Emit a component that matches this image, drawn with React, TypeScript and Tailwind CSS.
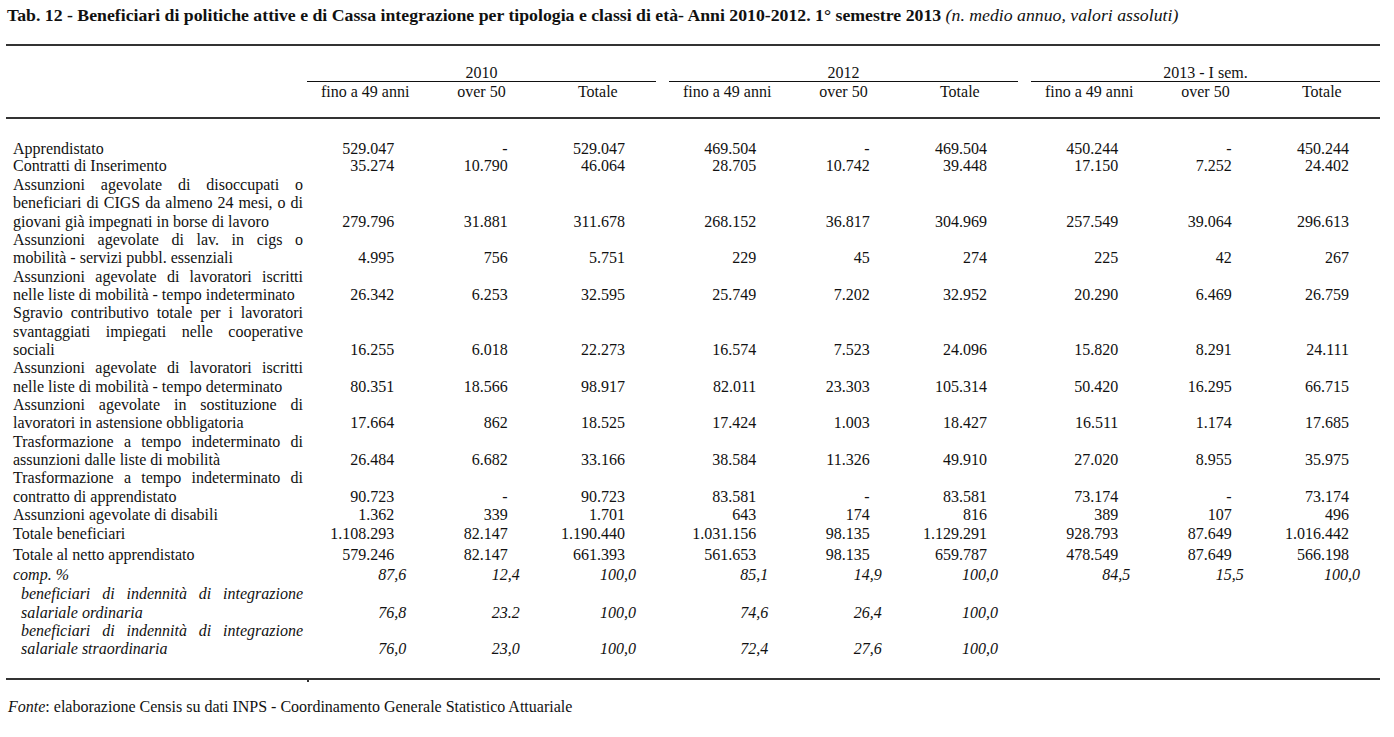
type Row = {
  lines: string[];
  vals: string[];
  italic?: boolean;
  indent?: boolean;
  cls: string;
};

const rows: Row[] = [
  {
    lines: ["Apprendistato"],
    vals: ["529.047", "-", "529.047", "469.504", "-", "469.504", "450.244", "-", "450.244"],
    cls: "leading-[17px]",
  },
  {
    lines: ["Contratti di Inserimento"],
    vals: ["35.274", "10.790", "46.064", "28.705", "10.742", "39.448", "17.150", "7.252", "24.402"],
    cls: "leading-[17px] mb-[2.5px]",
  },
  {
    lines: [
      "Assunzioni agevolate di disoccupati o",
      "beneficiari di CIGS da almeno 24 mesi, o di",
      "giovani già impegnati in borse di lavoro",
    ],
    vals: ["279.796", "31.881", "311.678", "268.152", "36.817", "304.969", "257.549", "39.064", "296.613"],
    cls: "leading-[18.33px]",
  },
  {
    lines: ["Assunzioni agevolate di lav. in cigs o", "mobilità - servizi pubbl. essenziali"],
    vals: ["4.995", "756", "5.751", "229", "45", "274", "225", "42", "267"],
    cls: "leading-[18.33px]",
  },
  {
    lines: ["Assunzioni agevolate di lavoratori iscritti", "nelle liste di mobilità - tempo indeterminato"],
    vals: ["26.342", "6.253", "32.595", "25.749", "7.202", "32.952", "20.290", "6.469", "26.759"],
    cls: "leading-[18.33px]",
  },
  {
    lines: [
      "Sgravio contributivo totale per i lavoratori",
      "svantaggiati impiegati nelle cooperative",
      "sociali",
    ],
    vals: ["16.255", "6.018", "22.273", "16.574", "7.523", "24.096", "15.820", "8.291", "24.111"],
    cls: "leading-[18.33px]",
  },
  {
    lines: ["Assunzioni agevolate di lavoratori iscritti", "nelle liste di mobilità - tempo determinato"],
    vals: ["80.351", "18.566", "98.917", "82.011", "23.303", "105.314", "50.420", "16.295", "66.715"],
    cls: "leading-[18.33px]",
  },
  {
    lines: ["Assunzioni agevolate in sostituzione di", "lavoratori in astensione obbligatoria"],
    vals: ["17.664", "862", "18.525", "17.424", "1.003", "18.427", "16.511", "1.174", "17.685"],
    cls: "leading-[18.33px]",
  },
  {
    lines: ["Trasformazione a tempo indeterminato di", "assunzioni dalle liste di mobilità"],
    vals: ["26.484", "6.682", "33.166", "38.584", "11.326", "49.910", "27.020", "8.955", "35.975"],
    cls: "leading-[18.33px]",
  },
  {
    lines: ["Trasformazione a tempo indeterminato di", "contratto di apprendistato"],
    vals: ["90.723", "-", "90.723", "83.581", "-", "83.581", "73.174", "-", "73.174"],
    cls: "leading-[18.33px]",
  },
  {
    lines: ["Assunzioni agevolate di disabili"],
    vals: ["1.362", "339", "1.701", "643", "174", "816", "389", "107", "496"],
    cls: "leading-[18.33px]",
  },
  {
    lines: ["Totale beneficiari"],
    vals: ["1.108.293", "82.147", "1.190.440", "1.031.156", "98.135", "1.129.291", "928.793", "87.649", "1.016.442"],
    cls: "leading-[20px]",
  },
  {
    lines: ["Totale al netto apprendistato"],
    vals: ["579.246", "82.147", "661.393", "561.653", "98.135", "659.787", "478.549", "87.649", "566.198"],
    cls: "leading-[21px]",
  },
  {
    lines: ["comp. %"],
    vals: ["87,6", "12,4", "100,0", "85,1", "14,9", "100,0", "84,5", "15,5", "100,0"],
    italic: true,
    cls: "leading-[20px]",
  },
  {
    lines: ["beneficiari di indennità di integrazione", "salariale ordinaria"],
    vals: ["76,8", "23.2", "100,0", "74,6", "26,4", "100,0", "", "", ""],
    italic: true,
    indent: true,
    cls: "leading-[18.33px]",
  },
  {
    lines: ["beneficiari di indennità di integrazione", "salariale straordinaria"],
    vals: ["76,0", "23,0", "100,0", "72,4", "27,6", "100,0", "", "", ""],
    italic: true,
    indent: true,
    cls: "leading-[18.33px]",
  },
];

const years = ["2010", "2012", "2013 - I sem."];
const subHeads = ["fino a 49 anni", "over 50", "Totale"];

// right padding per sub-column, regular vs italic (decimal tab in the source)
const padRegular = ["pr-[29px]", "pr-[32px]", "pr-[31px]"];
const padItalic = ["pr-[17px]", "pr-[20px]", "pr-[20px]"];

function Label({ row }: { row: Row }) {
  return (
    <div className={row.indent ? "w-[301px] shrink-0 pl-[15px] pr-[4px]" : "w-[301px] shrink-0 pl-[7px] pr-[4px]"}>
      {row.lines.map((line, i) => (
        <div
          key={i}
          className={i < row.lines.length - 1 ? "text-justify [text-align-last:justify]" : "text-left"}
        >
          {line}
        </div>
      ))}
    </div>
  );
}

function DataRow({ row }: { row: Row }) {
  const pads = row.italic ? padItalic : padRegular;
  return (
    <div className={`flex items-end ${row.cls} ${row.italic ? "italic" : ""}`}>
      <Label row={row} />
      <div className="flex gap-[13px]">
        {[0, 1, 2].map((g) => (
          <div key={g} className="grid w-[349px] grid-cols-3">
            {[0, 1, 2].map((c) => (
              <div key={c} className={`text-right ${pads[c]}`}>
                {row.vals[g * 3 + c]}
              </div>
            ))}
          </div>
        ))}
      </div>
    </div>
  );
}

export default function App() {
  return (
    <div className="h-[737px] w-[1394px] overflow-hidden bg-white font-['Liberation_Serif','Times_New_Roman',serif] text-[16px] text-[#111]">
      <div className="pl-[7px] pt-[6px] text-[17.75px] leading-[18px] font-bold whitespace-nowrap">
        Tab. 12 - Beneficiari di politiche attive e di Cassa integrazione per tipologia e classi di età- Anni
        2010-2012. 1° semestre 2013{" "}
        <span className="font-normal italic">(n. medio annuo, valori assoluti)</span>
      </div>

      <div className="ml-[6px] mt-[20px] w-[1374px]">
        <div className="h-[2px] bg-[#333]" />

        <div className="mt-[18.5px] flex">
          <div className="w-[301px] shrink-0" />
          <div className="flex gap-[13px]">
            {years.map((y) => (
              <div key={y} className="w-[349px]">
                <div className="border-b border-[#111] text-center leading-[16px]">{y}</div>
                <div className="grid grid-cols-3 pt-[1px] leading-[18px]">
                  {subHeads.map((s) => (
                    <div key={s} className="text-center">
                      {s}
                    </div>
                  ))}
                </div>
              </div>
            ))}
          </div>
        </div>

        <div className="mt-[16px] h-[2px] bg-[#333]" />

        <div className="mt-[21px]">
          {rows.map((r, i) => (
            <DataRow key={i} row={r} />
          ))}
        </div>

        <div className="relative mt-[19.5px] h-[2px] bg-[#333]">
          <div className="absolute left-[301px] top-[2px] h-[2px] w-[2px] bg-[#333]" />
        </div>
      </div>

      <div className="mt-[18px] pl-[8px] text-[16px] leading-[18px]">
        <span className="italic">Fonte</span>: elaborazione Censis su dati INPS - Coordinamento Generale Statistico
        Attuariale
      </div>
    </div>
  );
}
